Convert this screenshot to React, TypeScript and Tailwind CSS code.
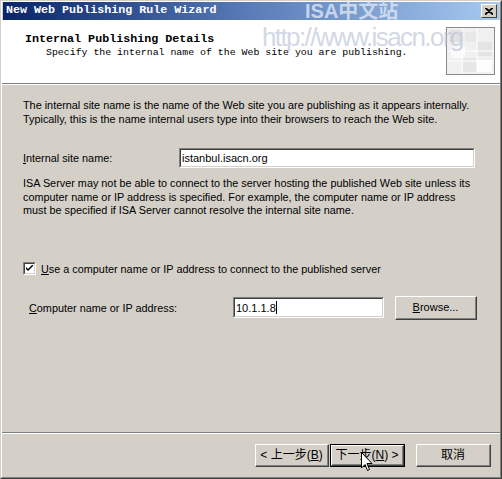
import React from "react";

const body = { fontFamily: "Tahoma, 'Liberation Sans', Arial, sans-serif" } as React.CSSProperties;
const mono = { fontFamily: "'Liberation Mono', 'Courier New', monospace" } as React.CSSProperties;
const cjk = { fontFamily: "'Liberation Sans', 'Noto Sans CJK SC', sans-serif" } as React.CSSProperties;

function Btn({ children, def, className = "" }: { children: React.ReactNode; def?: boolean; className?: string }) {
  return (
    <div className={`${def ? "border border-black" : ""} ${className}`}>
      <div className="w-full h-full border-t border-l border-white border-r border-b border-r-[#404040] border-b-[#404040]">
        <div className="w-full h-full border-r border-b border-[#808080] flex items-center justify-center text-[12px] text-black">
          {children}
        </div>
      </div>
    </div>
  );
}

function Input({ value, className = "", caret }: { value: string; className?: string; caret?: boolean }) {
  return (
    <div className={`border-t border-l border-[#808080] border-r border-b border-r-white border-b-white ${className}`}>
      <div className="w-full h-full border-t border-l border-[#404040] border-r border-b border-r-[#d4d0c8] border-b-[#d4d0c8] bg-white flex items-center pl-[1px] text-[11px]" style={body}>
        <span>{value}</span>
        {caret && <span className="inline-block w-[1px] h-[13px] bg-black" />}
      </div>
    </div>
  );
}

export default function App() {
  return (
    <div className="relative w-[502px] h-[479px] bg-[#d4d0c8] overflow-hidden">
      <div className="w-full h-full border-l border-t border-[#d4d0c8] border-r border-b border-r-[#404040] border-b-[#404040]">
        <div className="w-full h-full border-l border-t border-white border-r border-b border-r-[#808080] border-b-[#808080] flex flex-col">
          {/* title bar */}
          <div className="h-[18px] mx-[1px] flex items-center justify-between pl-[3px] pr-[2px] bg-gradient-to-r from-[#0a246a] via-[#5a7cb8] to-[#a6caf0]">
            <span className="text-white font-bold text-[11.7px] leading-none" style={mono}>New Web Publishing Rule Wizard</span>
            <div className="w-[16px] h-[14px] bg-[#d4d0c8] border-t border-l border-white border-r border-b border-r-[#404040] border-b-[#404040] flex items-center justify-center">
              <svg width="8" height="7" viewBox="0 0 8 7">
                <path d="M0 0 L8 7 M1 0 L8 6 M8 0 L0 7 M7 0 L0 6" stroke="black" strokeWidth="1.2" />
              </svg>
            </div>
          </div>
          {/* header */}
          <div className="h-[64px] bg-white flex justify-between pl-[23px] pr-[5px] pt-[12px] border-b border-[#808080]">
            <div>
              <div className="text-[11.7px] font-bold leading-[14px] text-black" style={mono}>Internal Publishing Details</div>
              <div className="text-[9.9px] leading-[13px] pl-[21px] text-black" style={mono}>Specify the internal name of the Web site you are publishing.</div>
            </div>
            <div className="w-[49px] h-[48px] mt-[-5px] border border-[#8a8a8a] bg-[#f4f4f4]">
              <svg width="47" height="46" viewBox="0 0 47 46">
                <rect x="0" y="0" width="47" height="46" fill="#f0f0f0" />
                <rect x="2" y="2" width="14" height="12" fill="#e2e2e2" />
                <rect x="18" y="4" width="12" height="10" fill="#e8e8e8" />
                <rect x="30" y="14" width="15" height="14" fill="#e4e4e4" />
                <rect x="4" y="18" width="14" height="12" fill="#fafafa" />
                <rect x="16" y="30" width="14" height="14" fill="#e6e6e6" />
                <rect x="30" y="32" width="15" height="12" fill="#fcfcfc" />
                <path d="M0 23 H47 M15 0 V46 M30 0 V46 M0 33 H47" stroke="#ffffff" strokeWidth="1" />
              </svg>
            </div>
          </div>
          <div className="h-[1px] bg-white" />
          {/* body */}
          <div className="flex-1 flex flex-col text-[10.85px] text-black pl-[21px] pr-[20px]" style={body}>
            <p className="mt-[13px] leading-[14px]">
              The internal site name is the name of the Web site you are publishing as it appears internally.
              <br />
              Typically, this is the name internal users type into their browsers to reach the Web site.
            </p>
            <div className="mt-[22px] flex items-center">
              <span className="w-[156px]"><u>I</u>nternal site name:</span>
              <Input value="istanbul.isacn.org" className="w-[296px] h-[20px]" />
            </div>
            <p className="mt-[9px] leading-[13.5px]">
              ISA Server may not be able to connect to the server hosting the published Web site unless its
              <br />
              computer name or IP address is specified. For example, the computer name or IP address
              <br />
              must be specified if ISA Server cannot resolve the internal site name.
            </p>
            <div className="mt-[43px] flex items-center gap-[5px]">
              <div className="w-[13px] h-[13px] border-t border-l border-[#808080] border-r border-b border-r-white border-b-white">
                <div className="w-full h-full border-t border-l border-[#404040] border-r border-b border-r-[#d4d0c8] border-b-[#d4d0c8] bg-white flex items-center justify-center">
                  <svg width="7" height="7" viewBox="0 0 7 7">
                    <path d="M0 2 L0 4 L2 6 L7 1 L7 -1 L2 4 Z" fill="black" />
                  </svg>
                </div>
              </div>
              <span><u>U</u>se a computer name or IP address to connect to the published server</span>
            </div>
            <div className="mt-[19px] flex items-center pl-[6px]">
              <span className="w-[204px]"><u>C</u>omputer name or IP address:</span>
              <Input value="10.1.1.8" caret className="w-[151px] h-[21px]" />
              <Btn className="w-[82px] h-[24px] ml-[11px]"><span style={body} className="text-[11px]"><u>B</u>rowse...</span></Btn>
            </div>
          </div>
          {/* bottom separator */}
          <div className="h-[1px] bg-[#808080]" />
          <div className="h-[1px] bg-white" />
          <div className="h-[43px] flex items-start justify-end pt-[10px] pr-[9px]" style={cjk}>
            <Btn className="w-[74px] h-[23px]"><span>&lt; 上一步(<u>B</u>)</span></Btn>
            <Btn def className="w-[75px] h-[23px] ml-[1px]"><span>下一步(<u>N</u>) &gt;</span></Btn>
            <Btn className="w-[75px] h-[23px] ml-[11px]"><span>取消</span></Btn>
          </div>
        </div>
      </div>
      {/* watermarks */}
      <div className="absolute left-[305px] top-[0px] text-[20px] font-bold leading-[22px] text-[#dfe6f2] opacity-80 pointer-events-none" style={cjk}>ISA中文站</div>
      <div className="absolute left-[262px] top-[22px] text-[26px] tracking-[-1.6px] leading-[30px] text-[#b4c0d4] opacity-60 pointer-events-none" style={{ fontFamily: "'Liberation Sans', Arial, sans-serif" }}>http://www.isacn.org</div>
      {/* cursor */}
      <svg className="absolute left-[361px] top-[452px]" width="13" height="21" viewBox="0 0 13 21">
        <path d="M0.5 0.5 L0.5 16 L4 12.5 L6.5 18.5 L8.5 17.5 L6 11.5 L11 11.5 Z" fill="white" stroke="black" strokeWidth="1" />
      </svg>
    </div>
  );
}
